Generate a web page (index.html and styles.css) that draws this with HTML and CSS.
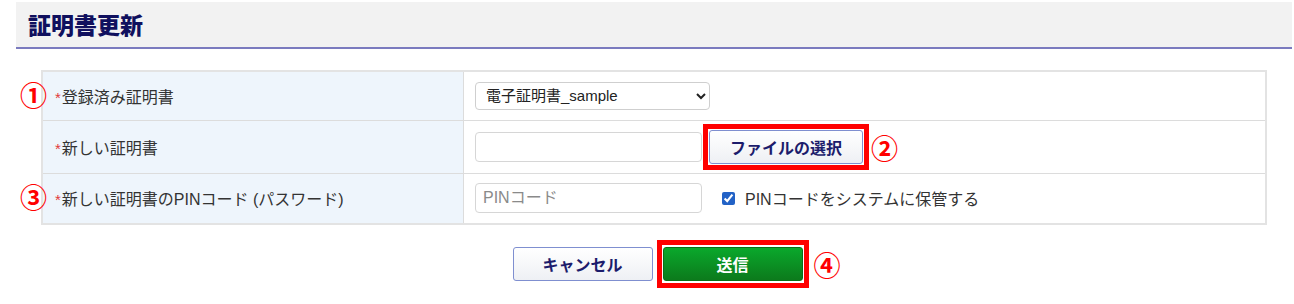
FILE: index.html
```html
<!DOCTYPE html>
<html lang="ja">
<head>
  <meta charset="UTF-8" />
  <meta name="viewport" content="width=device-width, initial-scale=1.0" />
  <title>証明書更新</title>
  <link rel="stylesheet" href="styles.css">
</head>
<body>
  <div class="page">
    <header class="page-title">証明書更新</header>

    <form class="cert-form" onsubmit="return false;">
      <table class="form-table">
        <tr class="row-1">
          <th><span class="mark mark-side">①</span><span class="req">*</span>登録済み証明書</th>
          <td>
            <select class="cert-select">
              <option>電子証明書_sample</option>
            </select>
          </td>
        </tr>
        <tr class="row-2">
          <th><span class="req">*</span>新しい証明書</th>
          <td>
            <div class="file-line">
              <input type="text" class="text-input" />
              <span class="hl"><button type="button" class="btn btn-light btn-file">ファイルの選択</button></span>
              <span class="mark">②</span>
            </div>
          </td>
        </tr>
        <tr class="row-3">
          <th><span class="mark mark-side">③</span><span class="req">*</span>新しい証明書のPINコード (パスワード)</th>
          <td>
            <div class="pin-line">
              <input type="text" class="text-input" placeholder="PINコード" />
              <label class="keep"><input type="checkbox" checked /> PINコードをシステムに保管する</label>
            </div>
          </td>
        </tr>
      </table>

      <div class="actions">
        <button type="button" class="btn btn-light btn-action">キャンセル</button>
        <span class="hl hl-send"><button type="submit" class="btn btn-green btn-action">送信</button></span>
        <span class="mark">④</span>
      </div>
    </form>
  </div>
</body>
</html>
```

FILE: styles.css
```css
body {
  font-family: "Liberation Sans", "Noto Sans CJK JP", sans-serif;
  color: #333;
  background: #fff;
  margin: 0;
  padding: 0;
}
.page {
  padding: 2px 2px 0 16px;
}
.page-title {
  background: #f2f2f2;
  border-bottom: 2px solid #7b7bbf;
  color: #10105e;
  font-family: "Noto Sans CJK JP", sans-serif;
  font-size: 23px;
  font-weight: 900;
  height: 45px;
  line-height: 44px;
  padding-left: 12px;
}
.cert-form {
  margin: 21px 25px 0 25px;
  width: 1226px;
}
.form-table {
  width: 100%;
  border-collapse: collapse;
  border: 2px solid #e3e3e3;
}
.form-table th,
.form-table td {
  border: 1px solid #dcdcdc;
  padding: 0 11px;
  vertical-align: middle;
  font-size: 16px;
}
.form-table th {
  position: relative;
  width: 397px;
  background: #eef5fc;
  text-align: left;
  font-weight: normal;
  padding-left: 12px;
}
.row-1 { height: 49px; }
.row-2 { height: 53px; }
.row-3 { height: 51px; }
.req {
  color: #e23a3a;
  font-size: 15px;
  margin-right: 1px;
}
.mark {
  color: #ff0000;
  font-family: "Noto Sans CJK JP", sans-serif;
  font-size: 27px;
  font-weight: 700;
  line-height: 1;
}
.mark-side {
  position: absolute;
  left: -23px;
  top: 50%;
  transform: translateY(-55%);
}
.cert-select {
  width: 235px;
  height: 28px;
  border: 1px solid #cfcfcf;
  border-radius: 4px;
  background: #fff;
  font-family: inherit;
  font-size: 15px;
  color: #222;
  padding: 0 6px;
}
.text-input {
  width: 227px;
  height: 30px;
  box-sizing: border-box;
  border: 1px solid #d6d6d6;
  border-radius: 4px;
  font-family: inherit;
  font-size: 16px;
  padding: 0 7px;
}
.text-input::placeholder {
  color: #8a8a8a;
}
.file-line,
.pin-line {
  display: flex;
  align-items: center;
}
.file-line .mark {
  margin-left: 2px;
  margin-top: 2px;
}
.hl {
  display: inline-flex;
  border: 5px solid #ff0000;
  padding: 1px;
}
.file-line .hl {
  margin-left: 1px;
}
.btn {
  font-family: "Noto Sans CJK JP", sans-serif;
  font-size: 16px;
  font-weight: 700;
  height: 34px;
  border-radius: 3px;
  cursor: pointer;
  padding: 0;
}
.btn-light {
  background: linear-gradient(#ffffff, #eef0f4);
  border: 1px solid #7f8fd0;
  color: #1c1c6c;
}
.btn-green {
  background: linear-gradient(#0aa82c, #0c7a1c);
  border: 1px solid #0a6e18;
  color: #fff;
}
.btn-file {
  width: 154px;
}
.keep {
  display: inline-flex;
  align-items: center;
  margin-left: 20px;
  font-size: 16px;
  color: #333;
}
.keep input {
  width: 13px;
  height: 13px;
  margin: 0 10px 0 0;
  accent-color: #2262c6;
}
.actions {
  display: flex;
  justify-content: center;
  align-items: center;
  gap: 4px;
  margin-top: 15px;
  padding-left: 45px;
}
.btn-action {
  width: 140px;
}
.actions .hl-send {
  padding: 2px 1px;
}
.actions .mark {
  margin-left: 1px;
}
```
